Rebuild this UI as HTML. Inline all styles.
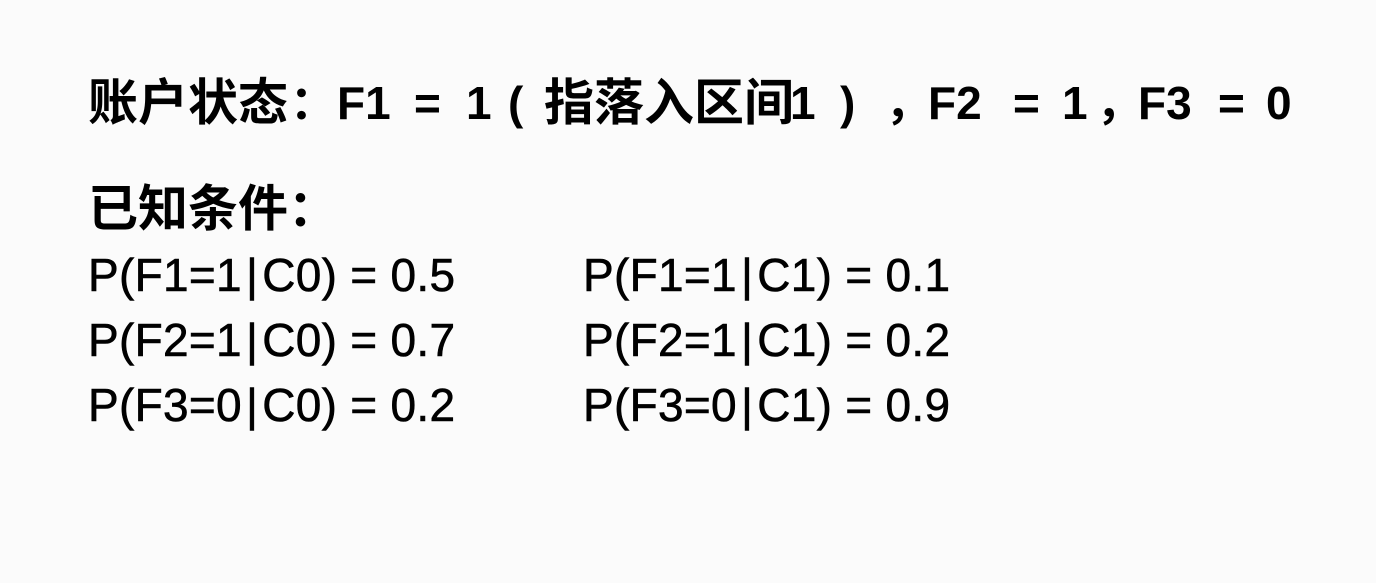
<!DOCTYPE html>
<html><head><meta charset="utf-8"><style>
html,body{margin:0;padding:0;}
body{width:1376px;height:583px;background:#fbfbfb;position:relative;overflow:hidden;color:#000;}
.b{position:absolute;font-family:"Liberation Sans","Noto Sans CJK SC",sans-serif;font-weight:bold;font-size:46px;line-height:1;white-space:pre;}
.c{font-size:50px;}
.r{position:absolute;font-family:"Liberation Sans","Noto Sans CJK SC",sans-serif;font-size:46px;line-height:1;white-space:pre;letter-spacing:0.3px;-webkit-text-stroke:0.6px #000;}
.p{margin:0 4px;}
</style></head><body>
<div class="b c" style="left:88px;top:78px">账户状态</div>
<div class="b" style="left:290px;top:80px">：</div>
<div class="b" style="left:337px;top:80px">F1</div>
<div class="b" style="left:414px;top:80px">=</div>
<div class="b" style="left:466px;top:80px">1</div>
<div class="b" style="left:508px;top:80px">(</div>
<div class="b c" style="left:544px;top:78px">指落入区间</div>
<div class="b" style="left:790px;top:80px">1</div>
<div class="b" style="left:840px;top:80px">)</div>
<div class="b" style="left:885px;top:80px">，</div>
<div class="b" style="left:928px;top:80px">F2</div>
<div class="b" style="left:1013px;top:80px">=</div>
<div class="b" style="left:1062px;top:80px">1</div>
<div class="b" style="left:1096px;top:80px">，</div>
<div class="b" style="left:1138px;top:80px">F3</div>
<div class="b" style="left:1218px;top:80px">=</div>
<div class="b" style="left:1266px;top:80px">0</div>
<div class="b c" style="left:88px;top:184px">已知条件：</div>
<div class="r" style="left:88px;top:252px">P(F1=1<span class="p">|</span>C0) = 0.5</div>
<div class="r" style="left:88px;top:317px">P(F2=1<span class="p">|</span>C0) = 0.7</div>
<div class="r" style="left:88px;top:382px">P(F3=0<span class="p">|</span>C0) = 0.2</div>
<div class="r" style="left:583px;top:252px">P(F1=1<span class="p">|</span>C1) = 0.1</div>
<div class="r" style="left:583px;top:317px">P(F2=1<span class="p">|</span>C1) = 0.2</div>
<div class="r" style="left:583px;top:382px">P(F3=0<span class="p">|</span>C1) = 0.9</div>
</body></html>
